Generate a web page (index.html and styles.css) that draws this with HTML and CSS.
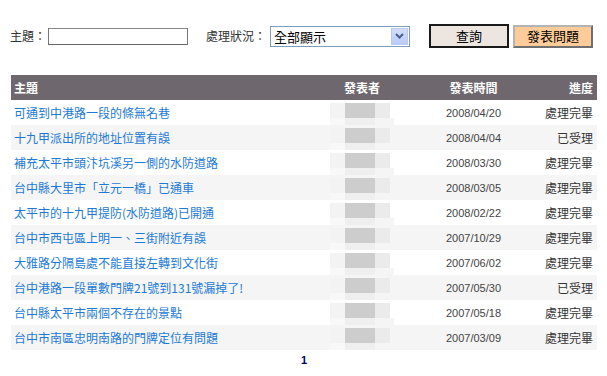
FILE: index.html
```html
<!DOCTYPE html>
<html lang="zh-Hant">
<head>
    <meta charset="UTF-8" />
    <title>問題回報列表</title>
    <link rel="stylesheet" href="styles.css">
</head>
<body>

<!-- 查詢區 -->
<div class="toolbar">
    <label class="field-label">主題：</label>
    <input type="text" class="subject-input">
    <label class="field-label status-label">處理狀況：</label>
    <div class="select-box">
        <span class="select-text">全部顯示</span>
        <span class="select-arrow">
            <svg width="9" height="6" viewBox="0 0 9 6"><path d="M1 1 L4.5 4.5 L8 1" fill="none" stroke="#4a5f8c" stroke-width="2"/></svg>
        </span>
    </div>
    <button class="btn btn-query">查詢</button>
    <button class="btn btn-post">發表問題</button>
</div>

<!-- 結果表格 -->
<table class="issue-table">
    <thead>
    <tr>
        <th class="col-title">主題</th>
        <th class="col-author">發表者</th>
        <th class="col-date">發表時間</th>
        <th class="col-status">進度</th>
    </tr>
    </thead>
    <tbody>
    <tr>
        <td class="col-title"><a href="#">可通到中港路一段的條無名巷</a></td>
        <td class="col-author"><div class="blur"><div class="blur-dark"></div><div class="blur-light"></div></div></td>
        <td class="col-date">2008/04/20</td>
        <td class="col-status">處理完畢</td>
    </tr>
    <tr>
        <td class="col-title"><a href="#">十九甲派出所的地址位置有誤</a></td>
        <td class="col-author"><div class="blur"><div class="blur-dark"></div><div class="blur-light"></div></div></td>
        <td class="col-date">2008/04/04</td>
        <td class="col-status">已受理</td>
    </tr>
    <tr>
        <td class="col-title"><a href="#">補充太平市頭汴坑溪另一側的水防道路</a></td>
        <td class="col-author"><div class="blur"><div class="blur-dark"></div><div class="blur-light"></div></div></td>
        <td class="col-date">2008/03/30</td>
        <td class="col-status">處理完畢</td>
    </tr>
    <tr>
        <td class="col-title"><a href="#">台中縣大里市「立元一橋」已通車</a></td>
        <td class="col-author"><div class="blur"><div class="blur-dark"></div><div class="blur-light"></div></div></td>
        <td class="col-date">2008/03/05</td>
        <td class="col-status">處理完畢</td>
    </tr>
    <tr>
        <td class="col-title"><a href="#">太平市的十九甲提防(水防道路)已開通</a></td>
        <td class="col-author"><div class="blur"><div class="blur-dark"></div><div class="blur-light"></div></div></td>
        <td class="col-date">2008/02/22</td>
        <td class="col-status">處理完畢</td>
    </tr>
    <tr>
        <td class="col-title"><a href="#">台中市西屯區上明一、三街附近有誤</a></td>
        <td class="col-author"><div class="blur"><div class="blur-dark"></div><div class="blur-light"></div></div></td>
        <td class="col-date">2007/10/29</td>
        <td class="col-status">處理完畢</td>
    </tr>
    <tr>
        <td class="col-title"><a href="#">大雅路分隔島處不能直接左轉到文化街</a></td>
        <td class="col-author"><div class="blur"><div class="blur-dark"></div><div class="blur-light"></div></div></td>
        <td class="col-date">2007/06/02</td>
        <td class="col-status">處理完畢</td>
    </tr>
    <tr>
        <td class="col-title"><a href="#">台中港路一段單數門牌21號到131號漏掉了!</a></td>
        <td class="col-author"><div class="blur"><div class="blur-dark"></div><div class="blur-light"></div></div></td>
        <td class="col-date">2007/05/30</td>
        <td class="col-status">已受理</td>
    </tr>
    <tr>
        <td class="col-title"><a href="#">台中縣太平市兩個不存在的景點</a></td>
        <td class="col-author"><div class="blur"><div class="blur-dark"></div><div class="blur-light"></div></div></td>
        <td class="col-date">2007/05/18</td>
        <td class="col-status">處理完畢</td>
    </tr>
    <tr>
        <td class="col-title"><a href="#">台中市南區忠明南路的門牌定位有問題</a></td>
        <td class="col-author"><div class="blur"><div class="blur-dark"></div><div class="blur-light"></div></div></td>
        <td class="col-date">2007/03/09</td>
        <td class="col-status">處理完畢</td>
    </tr>
    </tbody>
</table>

<div class="pager">1</div>

</body>
</html>
```

FILE: styles.css
```css
body {
    margin: 0;
    padding: 24px 0 0 0;
    font-family: "Noto Sans CJK TC", "Liberation Sans", sans-serif;
    font-size: 12px;
    color: #333;
    background: #fff;
}

.toolbar {
    display: flex;
    align-items: center;
    height: 24px;
    padding-left: 10px;
}

.field-label {
    font-size: 12px;
    color: #333;
    line-height: 16px;
    width: 38px;
}

.status-label {
    width: 64px;
    margin-left: 18px;
}

.subject-input {
    width: 140px;
    height: 17px;
    box-sizing: border-box;
    margin: 0;
    padding: 0 2px;
    border: 1px solid #777;
    border-top-color: #888;
    border-bottom-color: #666;
    background: #fff;
}

.select-box {
    width: 140px;
    height: 21px;
    box-sizing: border-box;
    border: 1px solid #7f9db9;
    display: flex;
    align-items: center;
    justify-content: space-between;
    padding: 0 1px 0 3px;
    background: #fff;
}

.select-text {
    font-size: 13px;
    color: #000;
    line-height: 17px;
}

.select-arrow {
    width: 17px;
    height: 17px;
    box-sizing: border-box;
    border: 1px solid #b8c9f2;
    background: linear-gradient(#d3defc, #b9cbf9);
    display: flex;
    align-items: center;
    justify-content: center;
}

.btn {
    width: 80px;
    height: 24px;
    margin: 0;
    padding: 0;
    box-sizing: border-box;
    font-family: "Noto Sans CJK TC", sans-serif;
    font-size: 13px;
    line-height: 18px;
    color: #000;
    cursor: pointer;
}

.btn-query {
    margin-left: 19px;
    background-color: #ede6e0;
    border: 2px solid #1a1a1a;
}

.btn-post {
    margin-left: 4px;
    height: 23px;
    background-color: #ffcc99;
    border: 2px solid;
    border-color: #b4b4b4 #6e6e6e #6e6e6e #b4b4b4;
}

.issue-table {
    margin: 27px 0 0 11px;
    width: 586px;
    border-collapse: collapse;
    table-layout: fixed;
}

.issue-table th,
.issue-table td {
    height: 25px;
    padding: 0;
    line-height: 16px;
    white-space: nowrap;
}

.issue-table th {
    background-color: #6e686e;
    color: #fff;
    font-weight: bold;
    font-size: 12px;
}

.issue-table tbody tr:nth-child(even) {
    background-color: #f5f5f5;
}

.issue-table .col-title {
    width: 308px;
    text-align: left;
    padding-left: 3px;
}

.col-title a {
    color: #1c7ad6;
    text-decoration: none;
}

.issue-table .col-author {
    width: 80px;
    text-align: center;
}

.issue-table .col-date {
    width: 143px;
    text-align: center;
    font-family: "Liberation Sans", sans-serif;
    font-size: 11px;
    color: #444;
}

.issue-table th.col-date {
    font-family: "Noto Sans CJK TC", sans-serif;
    font-size: 12px;
    color: #fff;
}

.issue-table .col-status {
    width: 48px;
    text-align: right;
    padding-right: 4px;
    color: #333;
}

.issue-table th.col-status {
    color: #fff;
}

.blur {
    width: 64px;
    height: 25px;
    margin: 0 auto;
    padding-top: 3px;
    box-sizing: border-box;
}

.blur-dark {
    height: 15px;
    background: linear-gradient(to right,
        #f3f3f3 0, #f3f3f3 15px,
        #cdcdcd 15px, #cdcdcd 45px,
        #ebebeb 45px, #ebebeb 60px,
        transparent 60px);
}

.blur-light {
    height: 7px;
    background: linear-gradient(to right,
        #f8f8f8 0, #f8f8f8 15px,
        #efefef 15px, #efefef 45px,
        #f5f5f5 45px, #f5f5f5 64px);
}

.pager {
    width: 586px;
    margin-left: 11px;
    margin-top: 4px;
    text-align: center;
    font-family: "Liberation Sans", sans-serif;
    font-size: 11px;
    font-weight: bold;
    color: #000066;
}
```
